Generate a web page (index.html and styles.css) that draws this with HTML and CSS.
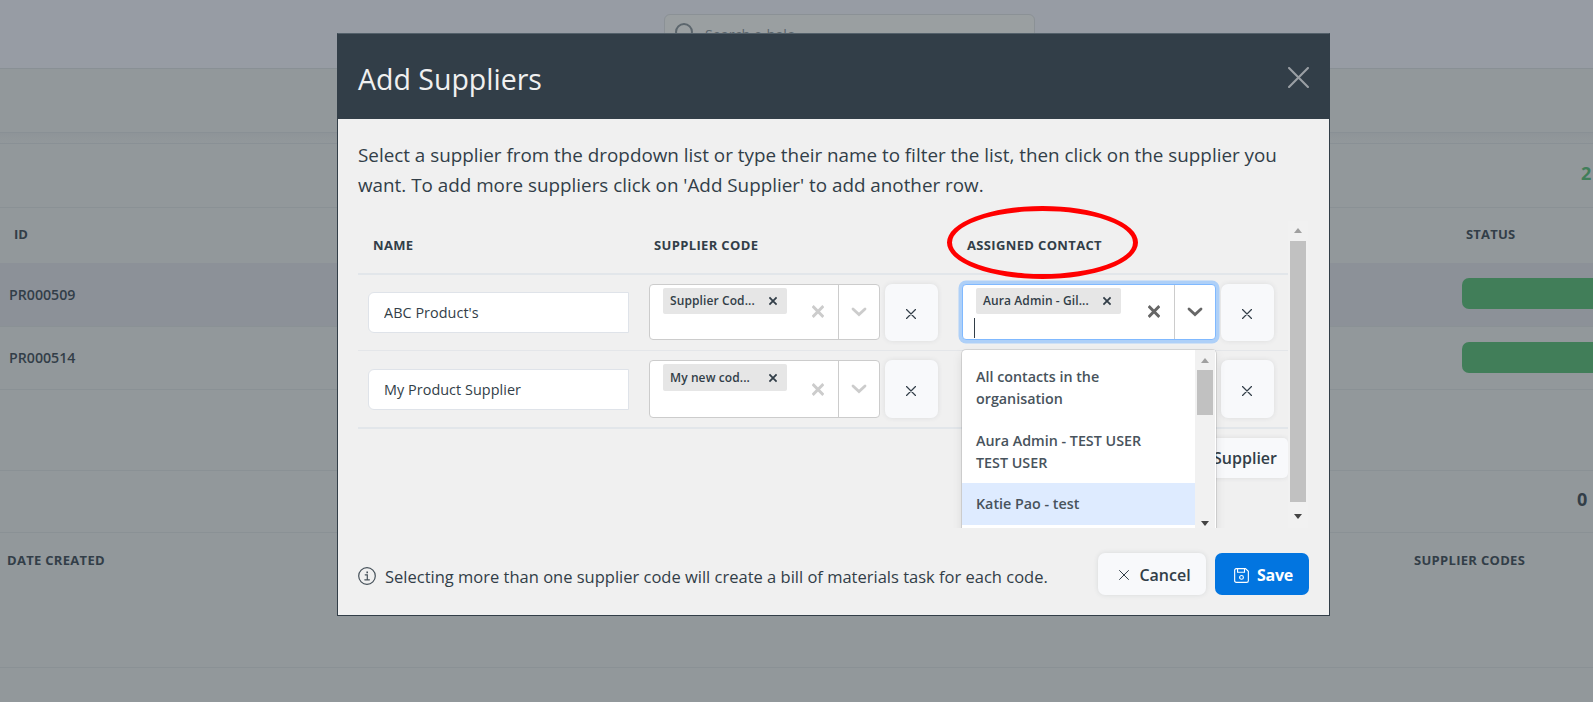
FILE: index.html
```
<!DOCTYPE html>
<html lang="en">
    <head>
        <title>Add Suppliers</title>
        <meta charset="UTF-8">
        <meta name="viewport" content="width=device-width, initial-scale=1.0">
        <link rel="stylesheet" href="styles.css">
    </head>

    <body>
        <svg class="sprite" width="0" height="0">
            <symbol id="x" viewBox="0 0 20 20"><path d="M1 1L19 19M19 1L1 19"/></symbol>
            <symbol id="arrow" viewBox="0 0 16 10"><path d="M2 2L8 7.5L14 2"/></symbol>
        </svg>

        <div class="page">
            <div class="topbar">
                <div class="search">
                    <svg width="20" height="20" viewBox="0 0 20 20"><circle cx="9" cy="9" r="8"/><path d="M15 15L19 19"/></svg>
                    <span>Search e-halo</span>
                </div>
            </div>
            <div class="toolbar"></div>
            <div class="gap"></div>
            <div class="line count green">2</div>
            <div class="line heads"><span class="c-id">ID</span><span class="c-status">STATUS</span></div>
            <div class="line item selected"><span>PR000509</span><div class="pill"></div></div>
            <div class="line item"><span>PR000514</span><div class="pill"></div></div>
            <div class="line blank"></div>
            <div class="line count zero">0</div>
            <div class="line heads2"><span>DATE CREATED</span><span class="c-codes">SUPPLIER CODES</span></div>
        </div>

        <div class="overlay">
            <div class="modal">
                <div class="modal-header">
                    <h1>Add Suppliers</h1>
                    <svg class="close" width="21" height="21"><use href="#x"/></svg>
                </div>
                <div class="modal-body">
                    <p class="intro">Select a supplier from the dropdown list or type their name to filter the list, then click on the supplier you<br>want. To add more suppliers click on 'Add Supplier' to add another row.</p>

                    <div class="scroll">
                        <div class="content">
                            <div class="row head">
                                <div>NAME</div>
                                <div>SUPPLIER CODE</div>
                                <div class="marked">ASSIGNED CONTACT<div class="ring"></div></div>
                            </div>
                            <div class="row">
                                <div class="cell"><input type="text" class="name" value="ABC Product's"></div>
                                <div class="cell">
                                    <div class="select">
                                        <div class="values"><div class="chip"><span>Supplier Cod...</span><svg width="8" height="10"><use href="#x"/></svg></div></div>
                                        <svg class="clear" width="12" height="13"><use href="#x"/></svg>
                                        <div class="drop"><svg width="16" height="10"><use href="#arrow"/></svg></div>
                                    </div>
                                    <button class="remove"><svg width="10" height="10"><use href="#x"/></svg></button>
                                </div>
                                <div class="cell">
                                    <div class="select contact focus">
                                        <div class="values"><div class="chip"><span>Aura Admin - Gil...</span><svg width="8" height="10"><use href="#x"/></svg></div><div class="caret"></div></div>
                                        <svg class="clear" width="12" height="13"><use href="#x"/></svg>
                                        <div class="drop"><svg width="16" height="10"><use href="#arrow"/></svg></div>

                                        <div class="menu">
                                            <div class="options">
                                                <div class="option">All contacts in the<br>organisation</div>
                                                <div class="option">Aura Admin - TEST USER<br>TEST USER</div>
                                                <div class="option active">Katie Pao - test</div>
                                            </div>
                                            <div class="bar small"><i class="up"></i><div class="thumb"></div><i class="down"></i></div>
                                        </div>
                                    </div>
                                    <button class="remove"><svg width="10" height="10"><use href="#x"/></svg></button>
                                </div>
                            </div>
                            <div class="row last">
                                <div class="cell"><input type="text" class="name" value="My Product Supplier"></div>
                                <div class="cell">
                                    <div class="select">
                                        <div class="values"><div class="chip"><span>My new cod...</span><svg width="8" height="10"><use href="#x"/></svg></div></div>
                                        <svg class="clear" width="12" height="13"><use href="#x"/></svg>
                                        <div class="drop"><svg width="16" height="10"><use href="#arrow"/></svg></div>
                                    </div>
                                    <button class="remove"><svg width="10" height="10"><use href="#x"/></svg></button>
                                </div>
                                <div class="cell">
                                    <div class="select contact"></div>
                                    <button class="remove"><svg width="10" height="10"><use href="#x"/></svg></button>
                                </div>
                            </div>
                            <div class="add-row"><button class="add">Supplier</button></div>
                        </div>
                        <div class="bar"><i class="up"></i><div class="thumb"></div><i class="down"></i></div>
                    </div>
                </div>
                <div class="modal-footer">
                    <svg class="info" width="18" height="18" viewBox="0 0 18 18"><circle cx="9" cy="9" r="8.3"/><path d="M7.2 7.8H9.3V12.6M6.8 12.8H11.4"/><path class="dot" d="M8.4 4.6h1.6v1.6h-1.6z"/></svg>
                    <span class="note">Selecting more than one supplier code will create a bill of materials task for each code.</span>
                    <button class="btn cancel"><svg width="10" height="10"><use href="#x"/></svg><span>Cancel</span></button>
                    <button class="btn save"><svg width="15" height="15" viewBox="0 0 16 16"><path d="M2.5 .7H12.2L15.3 3.5V13.5Q15.3 15.3 13.5 15.3H2.5Q.7 15.3 .7 13.5V2.5Q.7 .7 2.5 .7ZM3.8 .8V4.5H11.2V.8"/><circle cx="8" cy="10" r="2"/></svg><span>Save</span></button>
                </div>
            </div>
        </div>
    </body>
</html>
```

FILE: styles.css
```
*{
    box-sizing: border-box;
}

body{
    margin: 0;
    height: 702px;
    overflow: hidden;
    font-family: "Open Sans", "Noto Sans", sans-serif;
    color: #323e48;
    background-color: #92989b;
}

svg{
    display: block;
    flex: none;
    fill: none;
    stroke: currentColor;
    stroke-width: 2;
    stroke-linecap: round;
    overflow: visible;
}

.sprite{
    position: absolute;
}

/* page behind the modal */
.page{
    height: 702px;
}

.topbar{
    height: 69px;
    padding: 14px 0 0 664px;
    background-color: #979ca4;
    border-bottom: 1px solid #899095;
}

.search{
    display: flex;
    align-items: center;
    gap: 10px;
    width: 371px;
    height: 41px;
    padding-left: 10px;
    color: #5c666d;
    font-size: 14.3px;
    background-color: #9a9fa1;
    border: 1px solid #8b9196;
    border-radius: 6px;
}

.search svg{
    margin-top: -3px;
}

.toolbar{
    height: 64px;
    border-bottom: 1px solid #899095;
}

.gap{
    height: 11px;
    background: linear-gradient(#8e9498, #92989b);
    border-bottom: 1px solid #899095;
}

.line{
    display: flex;
    align-items: center;
    border-bottom: 1px solid #8a9195;
}

.count{
    height: 64px;
    padding: 0 0 5px 1581px;
    font-size: 18px;
    font-weight: 700;
}

.green{
    color: #417e59;
}

.zero{
    height: 62px;
    padding: 0 0 6px 1577px;
}

.heads{
    height: 55px;
    padding: 0 0 3px 14px;
    font-size: 13px;
    font-weight: 700;
    border-bottom: 0;
}

.c-id{
    width: 1452px;
}

.c-status{
    letter-spacing: .2px;
}

.item{
    height: 63px;
    padding: 0 0 2px 9px;
    font-size: 14.2px;
    font-weight: 600;
    overflow: hidden;
}

.item span{
    width: 1453px;
    flex: none;
}

.selected{
    height: 64px;
    padding-bottom: 0;
    background-color: #8c9198;
}

.pill{
    width: 200px;
    height: 31px;
    flex: none;
    background-color: #417e59;
    border-radius: 7px;
}

.selected .pill{
    margin-top: -2px;
}

.blank{
    height: 81px;
}

.heads2{
    height: 135px;
    padding: 18px 0 0 7px;
    align-items: flex-start;
    font-size: 13px;
    font-weight: 700;
    letter-spacing: .3px;
}

.heads2 span{
    width: 1407px;
}

.heads2 .c-codes{
    width: auto;
}

/* modal */
.overlay{
    position: fixed;
    top: 0;
    left: 0;
    width: 100%;
    height: 100%;
    padding: 33px 0 0 337px;
}

.modal{
    width: 993px;
    height: 583px;
    background-color: #f0f0f0;
    border: 1px solid #323e48;
    border-top-color: #53606a;
}

.modal-header{
    display: flex;
    align-items: center;
    justify-content: space-between;
    height: 85px;
    padding: 0 20px;
    color: #f0f0f0;
    background-color: #323e48;
}

h1{
    margin: 4px 0 0;
    font-size: 28.5px;
    font-weight: 400;
    line-height: 36px;
}

.close{
    margin-top: 1px;
    color: #9a9fa4;
    stroke-width: 2;
}

.modal-body{
    padding: 21px 20px 0;
}

.intro{
    margin: 0;
    height: 81px;
    font-size: 18.83px;
    line-height: 30px;
    white-space: nowrap;
}

/* the mark in the header row may stick out at the top, the menu is cut at the bottom */
.scroll{
    display: flex;
    justify-content: space-between;
    width: 950px;
    height: 307px;
    clip-path: inset(-30px 0 0 0);
}

.content{
    width: 930px;
}

.row{
    display: grid;
    grid-template-columns: 281px 313px 336px;
    height: 76px;
    border-bottom: 1px solid #e4e6e9;
}

.head{
    height: 54px;
    padding-bottom: 4px;
    align-items: center;
    font-size: 13px;
    font-weight: 700;
    letter-spacing: .35px;
    border-bottom: 2px solid #e2e6ea;
}

.head > div{
    padding-left: 15px;
}

.last{
    height: 78px;
    border-bottom: 2px solid #e2e6ea;
}

.cell{
    display: flex;
    align-items: center;
    gap: 5px;
    padding: 0 10px;
}

.name{
    width: 261px;
    height: 41px;
    padding: 0 15px;
    font-family: inherit;
    font-size: 14.4px;
    letter-spacing: .05px;
    color: #323e48;
    background-color: #fff;
    border: 1px solid #dfe3e9;
    border-radius: 6px 0 0 6px;
}

.select{
    position: relative;
    display: flex;
    align-items: center;
    width: 231px;
    height: 56px;
    margin-top: -2px;
    background-color: #fff;
    border: 1px solid #ccc;
    border-radius: 4px;
    color: #ccc;
}

.last .select{
    height: 58px;
    margin-top: 0;
}

.last .remove{
    height: 58px;
}

.contact{
    width: 254px;
}

.values{
    flex: 1;
    align-self: stretch;
    padding: 3px 0 0 13px;
}

.chip{
    display: flex;
    align-items: center;
    justify-content: space-between;
    width: 124px;
    height: 26px;
    padding: 0 10px 0 7px;
    font-size: 12px;
    font-weight: 600;
    letter-spacing: .1px;
    color: #323e48;
    background-color: #e6e6e6;
    border-radius: 2px;
    white-space: nowrap;
}

.last .chip{
    height: 27px;
}

.chip span{
    margin-top: -1px;
}

.chip svg{
    stroke-width: 4.5;
    stroke-linecap: butt;
}

.clear{
    margin-right: 14px;
    stroke-width: 5;
    stroke-linecap: butt;
}

.drop{
    display: flex;
    align-items: center;
    justify-content: center;
    align-self: stretch;
    width: 41px;
    border-left: 1px solid #ccc;
}

.drop svg{
    stroke-width: 2.8;
}

.focus{
    color: #666;
    border-color: #80b9ff;
    box-shadow: 0 0 0 3.5px #aed0f8;
}

.focus .chip{
    width: 145px;
}

.caret{
    width: 1px;
    height: 20px;
    margin: 4px 0 0 -2px;
    background-color: #323e48;
}

.remove{
    display: flex;
    align-items: center;
    justify-content: center;
    width: 53px;
    height: 57px;
    padding: 3px 1px 0 0;
    color: #323e48;
    background-color: #f8f9fb;
    border: 0;
    border-radius: 7px;
    box-shadow: 0 0 5px rgba(50,62,72,0.1);
}

.remove svg{
    stroke-width: 2.4;
}

.menu{
    position: absolute;
    z-index: 2;
    top: 65px;
    left: -1px;
    display: flex;
    width: 254px;
    height: 300px;
    background-color: #fff;
    border-radius: 4px;
    box-shadow: 0 0 0 1px rgba(0,0,0,0.1), 0 4px 11px rgba(0,0,0,0.1);
}

.options{
    width: 233px;
    padding-top: 6px;
    font-size: 14.3px;
    font-weight: 600;
    line-height: 22px;
    color: #48535c;
    white-space: nowrap;
}

.option{
    padding: 10px 14px;
}

.active{
    background-color: #deebff;
    margin-top: -1px;
}

.bar{
    display: flex;
    flex-direction: column;
    align-items: center;
    width: 20px;
    height: 307px;
    padding: 7px 0 9px;
    background-color: #f1f1f1;
}

.bar i{
    width: 0;
    height: 0;
    border: 4.5px solid transparent;
}

.bar .up{
    border-top: 0;
    border-bottom: 5px solid #a0a0a0;
}

.bar .down{
    margin-top: auto;
    border-bottom: 0;
    border-top: 5px solid #444;
}

.thumb{
    width: 16px;
    height: 261px;
    margin-top: 8px;
    background-color: #c1c1c1;
}

.small{
    height: 178px;
    width: 20px;
    padding: 8px 0 2px;
}

.small .thumb{
    height: 45px;
    margin-top: 7px;
}

/* red mark round the column title */
.marked{
    position: relative;
}

.ring{
    position: absolute;
    z-index: 3;
    top: -30px;
    left: -5px;
    width: 191px;
    height: 73px;
    border: 5px solid #f00;
    border-radius: 50%;
}

.add-row{
    display: flex;
    justify-content: flex-end;
    padding-top: 9px;
}

.add{
    width: 125px;
    height: 40px;
    padding: 0 11px 0 0;
    text-align: right;
    font-family: inherit;
    font-size: 16px;
    font-weight: 600;
    color: #323e48;
    background-color: #f8f9fb;
    border: 0;
    border-radius: 5px;
    box-shadow: 0 0 5px rgba(50,62,72,0.1);
}

.modal-footer{
    display: flex;
    align-items: center;
    padding: 25px 20px 0;
}

.info{
    margin-top: 4px;
    stroke-width: 1.2;
    color: #46515a;
}

.note{
    flex: 1;
    margin: 4px 0 0 9px;
    font-size: 16.5px;
    white-space: nowrap;
}

.info .dot{
    fill: currentColor;
    stroke: none;
}

.btn{
    display: flex;
    align-items: center;
    justify-content: center;
    height: 42px;
    padding: 2px 0 0;
    font-family: inherit;
    font-size: 16px;
    border: 0;
    border-radius: 7px;
}

.cancel{
    width: 108px;
    gap: 10px;
    padding-left: 6px;
    font-weight: 600;
    color: #323e48;
    background-color: #f8f9fb;
    box-shadow: 0 0 5px rgba(50,62,72,0.12);
}

.save{
    width: 94px;
    margin-left: 9px;
    gap: 8px;
    padding-left: 3px;
    font-weight: 700;
    letter-spacing: -.2px;
    color: #fff;
    background-color: #0275e0;
}

.save svg{
    stroke-width: 1.2;
}
```
